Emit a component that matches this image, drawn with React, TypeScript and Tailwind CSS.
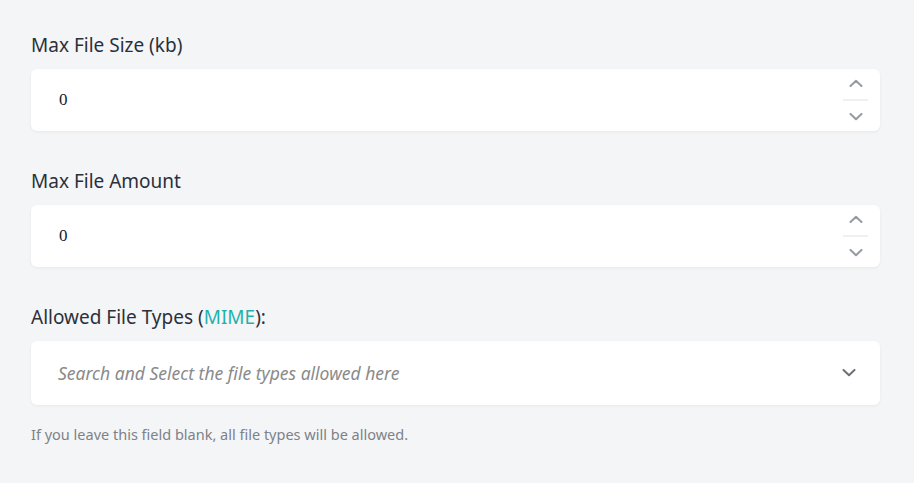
import React from "react";

function Chevron({ up, className }: { up?: boolean; className?: string }) {
  return (
    <svg width="14" height="8" viewBox="0 0 14 8" className={className} fill="none">
      <polyline
        points={up ? "1.5,7 7,1.8 12.5,7" : "1.5,1 7,6.2 12.5,1"}
        stroke="currentColor"
        strokeWidth="2"
        strokeLinecap="round"
        strokeLinejoin="round"
      />
    </svg>
  );
}

function NumberField({ label }: { label: string }) {
  return (
    <div className="flex flex-col gap-3">
      <label className="text-[19px] leading-6 text-[#2b303b]">{label}</label>
      <div className="flex h-[62px] items-center rounded-md bg-white pl-[28px] pr-[12px] shadow-[0_1px_3px_rgba(0,0,0,0.06)]">
        <span className="flex-1 font-['Liberation_Serif',serif] text-[17px] text-[#1a1a1a]">0</span>
        <div className="flex w-[25px] flex-col items-center">
          <Chevron up className="text-[#959ba3]" />
          <div className="my-[12px] h-[2px] w-[25px] bg-[#eef0f2]" />
          <Chevron className="text-[#959ba3]" />
        </div>
      </div>
    </div>
  );
}

export default function App() {
  return (
    <div className="min-h-[483px] bg-[#f4f5f7] pl-[31px] pr-[34px] pt-[33px] font-['Noto_Sans',sans-serif]">
      <div className="flex flex-col gap-[38px]">
        <NumberField label="Max File Size (kb)" />
        <NumberField label="Max File Amount" />
        <div className="flex flex-col gap-3">
          <label className="text-[19px] leading-6 text-[#2b303b]">
            Allowed File Types (<span className="text-[#1fb2ad]">MIME</span>):
          </label>
          <div className="flex h-[64px] items-center rounded-md bg-white pl-[27px] pr-[24px] shadow-[0_1px_3px_rgba(0,0,0,0.06)]">
            <span className="flex-1 text-[17.5px] italic text-[#8a8a8a]">
              Search and Select the file types allowed here
            </span>
            <Chevron className="text-[#6b7078]" />
          </div>
        </div>
      </div>
      <p className="mt-[19px] text-[14.5px] leading-5 text-[#7d8288]">
        If you leave this field blank, all file types will be allowed.
      </p>
    </div>
  );
}
